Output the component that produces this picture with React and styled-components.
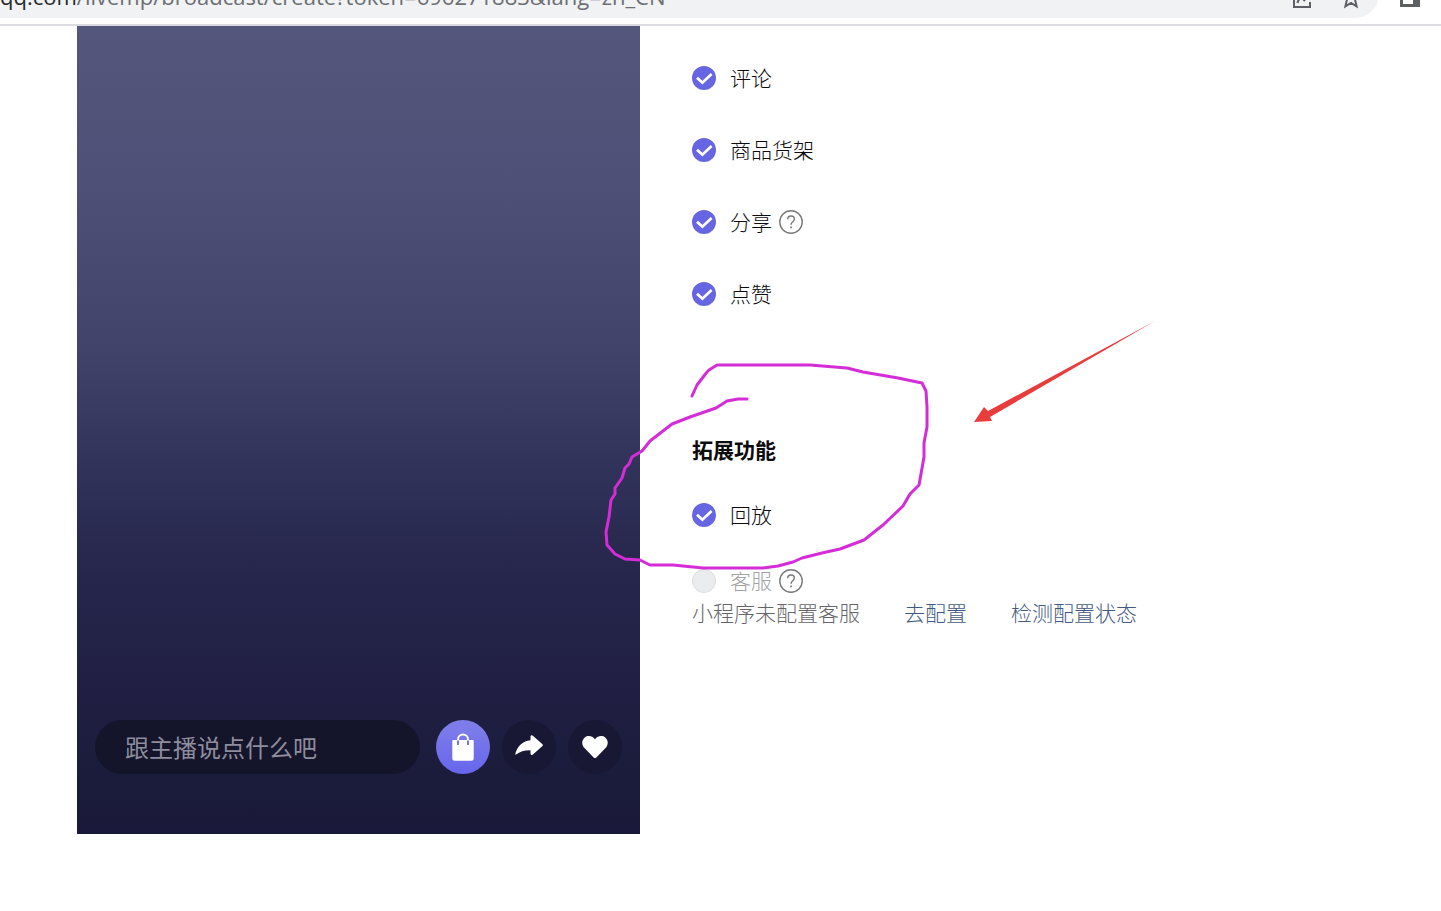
import React from "react";
import styled, { createGlobalStyle } from "styled-components";

const GlobalStyle = createGlobalStyle`
  *, *::before, *::after { box-sizing: border-box; }
  body {
    margin: 0;
    background: #fff;
    color: #0c0c0e;
    font-family: "Noto Sans CJK SC", sans-serif;
    font-size: 21px;
    font-weight: 300;
    line-height: 32px;
  }
`;

const BrowserBar = styled.header`
  display: flex;
  align-items: flex-end;
  height: 26px;
  padding-bottom: 6px;
  border-bottom: 2px solid #dcdce0;
  background: #fff;
  overflow: hidden;
`;

const AddressBar = styled.div`
  flex: 1;
  display: flex;
  align-items: flex-end;
  justify-content: space-between;
  height: 48px;
  padding: 0 16px 6px 0;
  border-radius: 0 24px 24px 0;
  background: #f1f2f4;
`;

const Url = styled.span`
  font: 400 22px/32px "Open Sans", sans-serif;
  color: #6b6e72;
  white-space: nowrap;
`;

const Host = styled.span`
  color: #27292c;
`;

const BarActions = styled.div`
  display: flex;
  align-items: flex-end;
  gap: 26px;
  padding-bottom: 2px;
`;

const IconButton = styled.button`
  display: flex;
  padding: 0;
  border: 0;
  background: none;
  color: #5c5f64;
  cursor: pointer;
`;

const SideButton = styled(IconButton)`
  margin: 0 20px 10px 20px;
`;

const Main = styled.main`
  position: relative;
  display: flex;
  gap: 52px;
  padding: 0 77px;
`;

const Preview = styled.section`
  flex: 0 1 563px;
  min-width: 0;
  display: flex;
  flex-direction: column;
  justify-content: flex-end;
  min-height: 808px;
  padding: 0 18px 60px;
  background: linear-gradient(
    #54567c 0%,
    #4f5077 20%,
    #42436a 40%,
    #31325a 55%,
    #26264c 68%,
    #201f43 82%,
    #1b1c3c 93%,
    #19183a 100%
  );
`;

const LiveBar = styled.div`
  display: flex;
  align-items: center;
  gap: 12px;
`;

const CommentInput = styled.input`
  flex: 1;
  min-width: 0;
  height: 54px;
  margin-right: 4px;
  padding: 0 30px 2px;
  border: 0;
  border-radius: 27px;
  background: #14142b;
  color: #fff;
  font: 400 24px/32px "Noto Sans CJK SC", sans-serif;
  &::placeholder { color: #8e8d9d; opacity: 1; }
`;

const RoundButton = styled.button`
  display: grid;
  place-items: center;
  width: 54px;
  height: 54px;
  padding: 0;
  border: 0;
  border-radius: 50%;
  background: ${(p) => (p.$primary ? "linear-gradient(#7f7fe9, #6766ec)" : "#191834")};
  color: #fff;
  cursor: pointer;
`;

const Settings = styled.section`
  flex: 1;
  min-width: 0;
  padding-top: 36px;
`;

const OptionList = styled.div`
  display: flex;
  flex-direction: column;
  gap: ${(p) => p.$gap}px;
`;

const OptionRow = styled.div`
  display: flex;
  align-items: center;
  gap: 7px;
  height: 32px;
`;

const OptionLabel = styled.label`
  display: flex;
  align-items: center;
  gap: 14px;
  color: ${(p) => (p.$disabled ? "#a2a2a4" : "inherit")};
`;

const OptionText = styled.span`
  padding-bottom: 2px;
`;

const TickBox = styled.span`
  display: grid;
  width: 24px;
  height: 24px;
  & > * { grid-area: 1 / 1; }
  & > svg { pointer-events: none; }
`;

const Tick = styled.input`
  appearance: none;
  width: 24px;
  height: 24px;
  margin: 0;
  border-radius: 50%;
  background: #6665e2;
  &:disabled {
    border: 1px solid #dcdcde;
    background: #ebecee;
  }
`;

const GroupTitle = styled.h2`
  margin: 123px 0 34px;
  font-size: 21px;
  line-height: 32px;
  font-weight: 700;
`;

const Notice = styled.p`
  display: flex;
  flex-wrap: wrap;
  gap: 44px;
  margin: 0;
  line-height: 30px;
  color: #666668;
`;

const NoticeLink = styled.a`
  color: #435980;
  text-decoration: none;
`;

const Markup = styled.svg`
  position: absolute;
  top: 0;
  left: 0;
  pointer-events: none;
`;

function HelpButton({ label }) {
  return (
    <IconButton type="button" aria-label={label}>
      <svg width="24" height="24" viewBox="0 0 24 24" fill="none" stroke="#77787a" strokeWidth="1.4">
        <circle cx="12" cy="12" r="11.2" />
        <path d="M8.700 9.200C8.700 7.200 10.100 6 12 6s3.300 1.200 3.300 3c0 1.400-.8 2.100-1.800 3-.9.800-1.400 1.300-1.400 2.700" />
        <path d="M12.100 16.600v1.700" strokeWidth="1.7" />
      </svg>
    </IconButton>
  );
}

function Option({ name, label, help, disabled }) {
  return (
    <OptionRow>
      <OptionLabel htmlFor={name} $disabled={disabled}>
        <TickBox>
          <Tick id={name} type="checkbox" defaultChecked={!disabled} disabled={disabled} />
          {!disabled && (
            <svg width="24" height="24" viewBox="0 0 24 24" fill="none" stroke="#fff" strokeWidth="2.700">
              <path d="M5 11.700l5.400 5L19.600 7.900" />
            </svg>
          )}
        </TickBox>
        <OptionText>{label}</OptionText>
      </OptionLabel>
      {help && <HelpButton label={label} />}
    </OptionRow>
  );
}

const basicOptions = [
  { name: "comment", label: "评论" },
  { name: "shelf", label: "商品货架" },
  { name: "share", label: "分享", help: true },
  { name: "like", label: "点赞" },
];

export default function App() {
  return (
    <>
      <GlobalStyle />
      <BrowserBar>
        <AddressBar>
          <Url>
            <Host>qq.com</Host>/livemp/broadcast/create?token=696271883&amp;lang=zh_CN
          </Url>
          <BarActions>
            <IconButton type="button" aria-label="分享">
              <svg width="22" height="22" viewBox="0 0 22 22" fill="none" stroke="currentColor" strokeWidth="2">
                <path d="M8 5H3v14h16v-5" />
                <path d="M6.500 15c.8-4 3.600-6.300 8-6.300M12.500 4.500l4.500 4.200-4.500 4.300" />
              </svg>
            </IconButton>
            <IconButton type="button" aria-label="收藏">
              <svg width="24" height="24" viewBox="0 0 24 24" fill="none" stroke="currentColor" strokeWidth="2">
                <path d="M12 3l2.600 6 6.400.6-4.900 4.300 1.500 6.500L12 17l-5.600 3.400 1.500-6.500L3 9.600 9.400 9z" />
              </svg>
            </IconButton>
          </BarActions>
        </AddressBar>
        <SideButton type="button" aria-label="侧边栏">
          <svg width="22" height="20" viewBox="0 0 22 20" fill="currentColor" fillRule="evenodd">
            <path d="M1 2h20v17H1zM4 5v11h10V9h4V5z" />
          </svg>
        </SideButton>
      </BrowserBar>
      <Main>
        <Preview>
          <LiveBar>
            <CommentInput aria-label="评论" placeholder="跟主播说点什么吧" />
            <RoundButton type="button" $primary aria-label="商品货架">
              <svg width="24" height="28" viewBox="0 0 24 28">
                <path d="M2.300 7h19.400a1 1 0 0 1 1 1v17.200a2.500 2.500 0 0 1-2.500 2.500H3.800a2.500 2.500 0 0 1-2.500-2.500V8a1 1 0 0 1 1-1z" fill="#fff" />
                <path d="M7 12V7a5 5 0 0 1 10 0v5" fill="none" stroke="#7574ea" strokeWidth="2" />
                <path d="M7 7.500V6.500a5 5 0 0 1 10 0v1" fill="none" stroke="#fff" strokeWidth="2" />
              </svg>
            </RoundButton>
            <RoundButton type="button" aria-label="分享">
              <svg width="30" height="28" viewBox="0 0 30 28" fill="currentColor">
                <path d="M16.500 3.800c0-1.500 1.300-2 2.400-1l9.300 8.200c.9.800.9 1.500 0 2.300l-9.300 8.200c-1.100 1-2.400.5-2.400-1v-3.300C10 17.200 5.700 18.700 2.100 21.600c-.6.400-1-.1-.8-.8C3.800 12.700 9 8 16.500 7.300z" />
              </svg>
            </RoundButton>
            <RoundButton type="button" aria-label="点赞">
              <svg width="28" height="24" viewBox="0 0 28 24" fill="currentColor">
                <path d="M14 4.200C16.800.6 21.300.2 24.200 2.500c3.500 2.800 3.200 7.600.3 10.600l-9.100 9.300c-.9.900-1.900.9-2.800 0l-9.100-9.300c-2.900-3-3.200-7.800.3-10.600C6.700.2 11.200.6 14 4.200z" />
              </svg>
            </RoundButton>
          </LiveBar>
        </Preview>
        <Settings>
          <OptionList $gap={40}>
            {basicOptions.map((o) => (
              <Option key={o.name} {...o} />
            ))}
          </OptionList>
          <GroupTitle>拓展功能</GroupTitle>
          <OptionList $gap={34}>
            <Option name="replay" label="回放" />
            <Option name="service" label="客服" help disabled />
          </OptionList>
          <Notice>
            <span>小程序未配置客服</span>
            <NoticeLink href="#configure">去配置</NoticeLink>
            <NoticeLink href="#check">检测配置状态</NoticeLink>
          </Notice>
        </Settings>
        <Markup width="1200" height="620" viewBox="0 26 1200 620" aria-hidden="true">
          <path
            d="M692 396L697 385 707 372 709 370 717 365H810L847 368 863 372 898 378 922 383 926 391 927 407 927 427 924 443 924 457 919 485 910 494 903 506 883 525 864 540 840 549 822 553 802 558 793 562 778 566 763 568H703L673 565H650L640 560 625 559 615 554 607 545 606 532 609 517 611 500 615 494 615 488 622 478 625 468 629 464 632 457 642 451 650 441 672 424 690 417 716 408 727 401 738 399H747"
            fill="none"
            stroke="#d42cd6"
            strokeWidth="3"
            strokeLinecap="round"
            strokeLinejoin="round"
          />
          <path d="M974 422L984 407 988 411 1155 321 990 417 992 421z" fill="#e93c3c" />
        </Markup>
      </Main>
    </>
  );
}
